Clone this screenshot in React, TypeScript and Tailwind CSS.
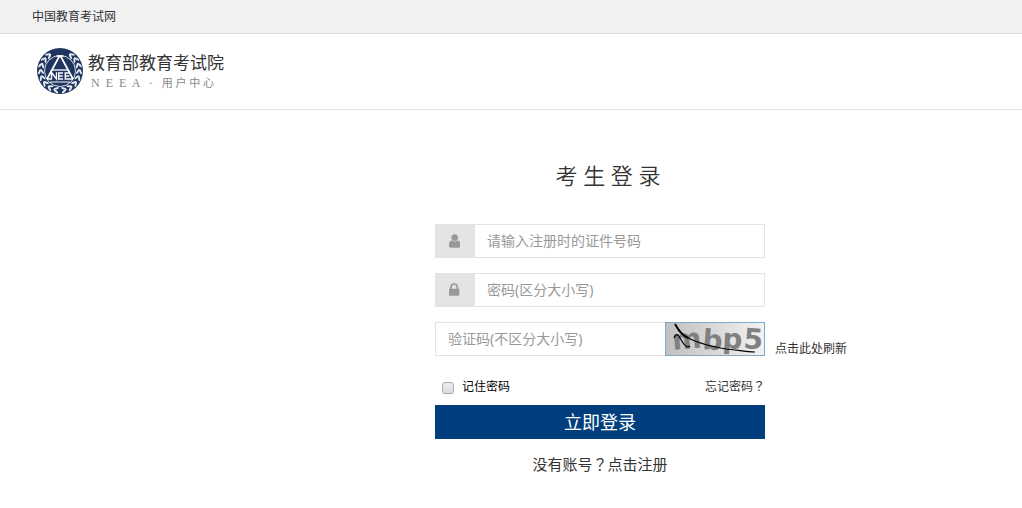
import { useState } from 'react';
import type { FormEvent, ReactNode } from 'react';

interface IconFieldProps {
  id: string;
  label: string;
  type: string;
  icon: ReactNode;
  value: string;
  onChange: (value: string) => void;
}

function IconField({ id, label, type, icon, value, onChange }: IconFieldProps) {
  return (
    <div className="flex h-[34px] border border-[#e4e4e4]">
      <label htmlFor={id} className="flex w-[39px] shrink-0 items-center justify-center bg-[#e4e4e4] pr-0.5 text-[#999]">
        {icon}
      </label>
      <input
        id={id}
        type={type}
        aria-label={label}
        placeholder={label}
        value={value}
        onChange={(e) => onChange(e.target.value)}
        className="min-w-0 flex-1 px-3 text-sm outline-none placeholder:text-[#999]"
      />
    </div>
  );
}

function UserIcon() {
  return (
    <svg viewBox="0 0 1280 1792" className="h-4" fill="currentColor" aria-hidden="true">
      <path d="M1280 1399q0 109-62.5 187t-150.5 78h-854q-88 0-150.5-78t-62.5-187q0-85 8.5-160.5t31.5-152 58.500-131 94-89 134.500-34.500q131 128 313 128t313-128q76 0 134.500 34.500t94 89 58.500 131 31.500 152 8.500 160.500zM1024 512q0 159-112.500 271.500t-271.500 112.500-271.500-112.500-112.500-271.500 112.500-271.500 271.500-112.500 271.500 112.500 112.500 271.500z" />
    </svg>
  );
}

function LockIcon() {
  return (
    <svg viewBox="0 0 1152 1792" className="h-4" fill="currentColor" aria-hidden="true">
      <path d="M320 768h512v-192q0-106-75-181t-181-75-181 75-75 181v192zM1152 864v576q0 40-28 68t-68 28h-960q-40 0-68-28t-28-68v-576q0-40 28-68t68-28h32v-192q0-184 132-316t316-132 316 132 132 316v192h32q40 0 68 28t28 68z" />
    </svg>
  );
}

// Angles of the leaf pairs around the left half, the right half is mirrored
const LEAVES = [100, 119, 138, 157, 176, 195, 214, 232];

function Wreath() {
  return (
    <g fill="#e8edf4">
      {LEAVES.map((angle) => (
        <g key={angle} transform={`rotate(${angle} 24 24) translate(43.200 24) rotate(90)`}>
          <ellipse cx="0" cy="-1.500" rx="2.900" ry="1" transform="rotate(28)" />
          <ellipse cx="0" cy="1.500" rx="2.900" ry="1" transform="rotate(-28)" />
        </g>
      ))}
    </g>
  );
}

function Emblem() {
  return (
    <svg viewBox="0 0 48 48" className="size-12 shrink-0" role="img" aria-label="NEEA">
      <circle cx="24" cy="24" r="23" fill="#1f355f" />
      <Wreath />
      <g transform="translate(48 0) scale(-1 1)">
        <Wreath />
      </g>
      <circle cx="24" cy="24" r="15.500" fill="#1f355f" stroke="#e8edf4" strokeWidth="0.900" />
      <g fill="none" stroke="#fff" strokeWidth="1.700">
        <path d="M20.500 9h7M23.500 9L11 32M24.500 9L37 32" />
        <path d="M16 23h16" strokeWidth="1.300" />
        <path d="M14 35h20" strokeWidth="1" />
        <path d="M11 32h4.500v-6.500l5 6.500v-6.800M27 26h-4.300v6h4.300M22.700 29h4M33.500 26h-4.300v6h7.800M29.200 29h4" strokeWidth="1.300" />
      </g>
    </svg>
  );
}

function Captcha() {
  return (
    <svg viewBox="0 0 100 34" className="h-[34px] w-[100px] shrink-0" role="img" aria-label="验证码">
      <defs>
        <linearGradient id="captcha-bg">
          <stop offset="0" stopColor="#c0c0c0" />
          <stop offset="1" stopColor="#f2f2f2" />
        </linearGradient>
      </defs>
      <rect x="0.5" y="0.5" width="99" height="33" fill="url(#captcha-bg)" stroke="#7fa9c9" />
      <text x="8 37 57 78" y="28 27 26 26" rotate="-5 4 3 4" fontSize="28" fontWeight="bold" fill="#808080" fontFamily="DejaVu Sans, sans-serif">
        mbp5
      </text>
      <path d="M10 2C13 7 15 12 23 16" fill="none" stroke="#000" strokeWidth="2" />
      <path d="M20 14C31 21 43 24 61 27C72 28 82 30 90 30" fill="none" stroke="#000" strokeWidth="1.200" />
      <path d="M9 16C11 11 13 12 15 16C18 21 21 27 25 24" fill="none" stroke="#000" strokeWidth="1.200" />
    </svg>
  );
}

// The TC face centres the full-width question mark in its box
function QuestionMark() {
  return <span className="font-['Noto_Sans_CJK_TC',sans-serif]">？</span>;
}

export default function App() {
  const [account, setAccount] = useState('');
  const [password, setPassword] = useState('');
  const [code, setCode] = useState('');
  const [remember, setRemember] = useState(false);

  const handleSubmit = (e: FormEvent) => {
    e.preventDefault();
  };

  return (
    <div className="bg-white font-['Noto_Sans','Noto_Sans_CJK_SC',sans-serif] text-[#333]">
      <nav className="flex h-[34px] items-center border-b border-[#ddd] bg-[#f1f1f1] px-8 text-xs">
        <a href="#">中国教育考试网</a>
      </nav>

      <header className="flex h-[76px] items-center gap-1 border-b border-[#e4e4e4] px-9 pb-0.5">
        <Emblem />
        <div>
          <h1 className="text-[17px] leading-6">教育部教育考试院</h1>
          <p className="pl-[3px] font-['Liberation_Serif','Noto_Sans_CJK_SC',serif] text-xs leading-4 whitespace-pre text-[#888]">
            {'N  E  E  A   ·   '}
            <span className="text-[11px]">用 户 中 心</span>
          </p>
        </div>
      </header>

      <main className="flex justify-center pl-[178px]">
        <form onSubmit={handleSubmit} className="w-[330px]">
          <h2 className="mt-[49px] mb-[33px] pl-4 text-center text-[22px] leading-8 font-[350]">考 生 登 录</h2>

          <div className="flex flex-col gap-[15px]">
            <IconField
              id="account"
              label="请输入注册时的证件号码"
              type="text"
              icon={<UserIcon />}
              value={account}
              onChange={setAccount}
            />
            <IconField
              id="password"
              label="密码(区分大小写)"
              type="password"
              icon={<LockIcon />}
              value={password}
              onChange={setPassword}
            />
            <div className="flex h-[34px]">
              <input
                id="code"
                type="text"
                aria-label="验证码"
                placeholder="验证码(不区分大小写)"
                value={code}
                onChange={(e) => setCode(e.target.value)}
                className="w-[230px] shrink-0 border border-r-0 border-[#e4e4e4] px-3 text-sm outline-none placeholder:text-[#999]"
              />
              <Captcha />
              <a href="#" className="ml-2.5 shrink-0 self-end text-xs leading-[14px] whitespace-nowrap">
                点击此处刷新
              </a>
            </div>
          </div>

          <div className="mt-[22px] flex items-center justify-between pl-[7px] text-xs">
            <label className="flex items-center gap-2 text-black">
              <input
                type="checkbox"
                checked={remember}
                onChange={(e) => setRemember(e.target.checked)}
                className="mt-0.5 size-3 appearance-none rounded-[3px] border border-[#aaa] bg-linear-to-b from-[#eee] to-[#ddd] shadow-xs checked:bg-[#003e7e]"
              />
              记住密码
            </label>
            <a href="#">
              忘记密码
              <QuestionMark />
            </a>
          </div>

          <button type="submit" className="mt-2.5 h-[34px] w-full bg-[#003e7e] text-lg leading-[34px] text-white">
            立即登录
          </button>

          <p className="mt-[13px] text-center text-[15px] leading-6">
            没有账号
            <QuestionMark />
            <a href="#">点击注册</a>
          </p>
        </form>
      </main>
    </div>
  );
}
